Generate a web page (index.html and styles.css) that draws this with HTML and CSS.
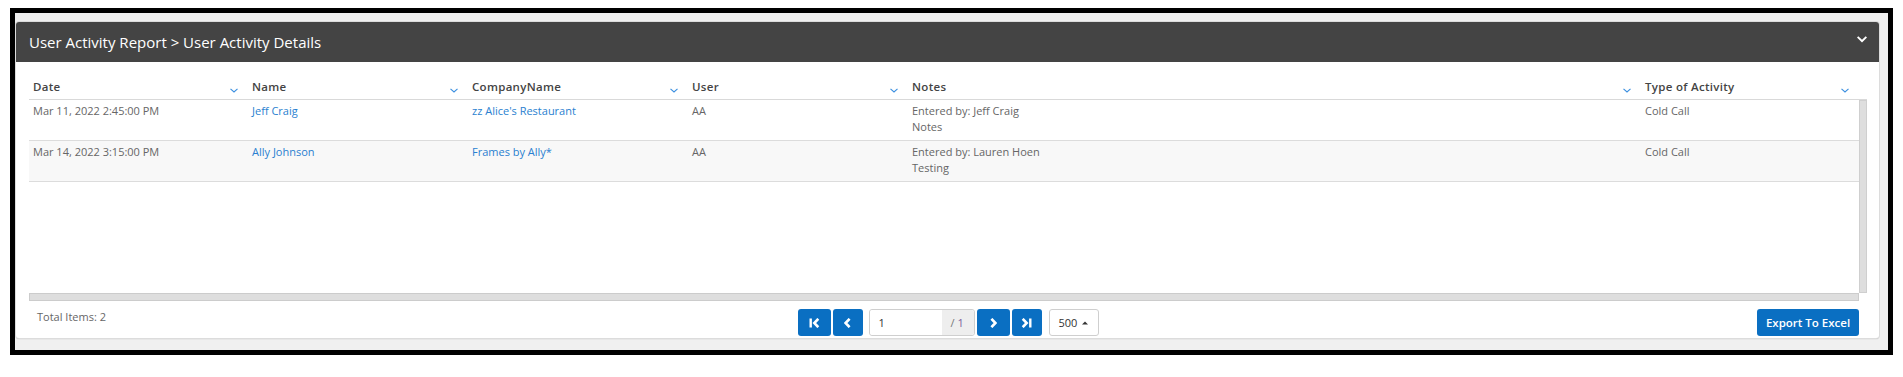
FILE: index.html
```html
<!DOCTYPE html>
<html>
<head>
<meta charset="utf-8">
<link rel="stylesheet" href="styles.css">
</head>
<body>
<div class="frame">
  <div class="panel">
    <div class="panel-head">
      <span class="title">User Activity Report &gt; User Activity Details</span>
      <svg class="toggle" width="10" height="7" viewBox="0 0 10 7"><path d="M1.3 0.2 L5 3.7 L8.7 0.2 L10 1.6 L5 6.6 L0 1.6 Z" fill="#fff"/></svg>
    </div>
    <div class="panel-body">
      <div class="grid">
        <div class="grid-head">
          <div class="hcell"><span>Date</span><svg class="sort" width="8" height="5" viewBox="0 0 8 5"><path d="M0.5 0.8 L4 4 L7.5 0.8" fill="none" stroke="#3b8fe0" stroke-width="1.1"/></svg></div>
          <div class="hcell"><span>Name</span><svg class="sort" width="8" height="5" viewBox="0 0 8 5"><path d="M0.5 0.8 L4 4 L7.5 0.8" fill="none" stroke="#3b8fe0" stroke-width="1.1"/></svg></div>
          <div class="hcell"><span>CompanyName</span><svg class="sort" width="8" height="5" viewBox="0 0 8 5"><path d="M0.5 0.8 L4 4 L7.5 0.8" fill="none" stroke="#3b8fe0" stroke-width="1.1"/></svg></div>
          <div class="hcell"><span>User</span><svg class="sort" width="8" height="5" viewBox="0 0 8 5"><path d="M0.5 0.8 L4 4 L7.5 0.8" fill="none" stroke="#3b8fe0" stroke-width="1.1"/></svg></div>
          <div class="hcell"><span>Notes</span><svg class="sort" width="8" height="5" viewBox="0 0 8 5"><path d="M0.5 0.8 L4 4 L7.5 0.8" fill="none" stroke="#3b8fe0" stroke-width="1.1"/></svg></div>
          <div class="hcell"><span>Type of Activity</span><svg class="sort" width="8" height="5" viewBox="0 0 8 5"><path d="M0.5 0.8 L4 4 L7.5 0.8" fill="none" stroke="#3b8fe0" stroke-width="1.1"/></svg></div>
          <div class="hcell spacer"></div>
        </div>
        <div class="grid-main">
          <div class="rows">
            <div class="row">
              <div class="cell">Mar 11, 2022 2:45:00 PM</div>
              <div class="cell"><a class="link">Jeff Craig</a></div>
              <div class="cell"><a class="link">zz Alice's Restaurant</a></div>
              <div class="cell">AA</div>
              <div class="cell">Entered by: Jeff Craig<br>Notes</div>
              <div class="cell">Cold Call</div>
            </div>
            <div class="row alt">
              <div class="cell">Mar 14, 2022 3:15:00 PM</div>
              <div class="cell"><a class="link">Ally Johnson</a></div>
              <div class="cell"><a class="link">Frames by Ally*</a></div>
              <div class="cell">AA</div>
              <div class="cell">Entered by: Lauren Hoen<br>Testing</div>
              <div class="cell">Cold Call</div>
            </div>
          </div>
          <div class="vscroll"></div>
        </div>
        <div class="hscroll"></div>
      </div>
      <div class="footer">
        <div class="total">Total Items: 2</div>
        <div class="pager">
          <button class="pbtn w33"><svg width="11" height="10" viewBox="0 0 11 10"><rect x="0.5" y="0.5" width="2.4" height="9" fill="#fff"/><path d="M9.3 0.8 L5.3 5 L9.3 9.2" fill="none" stroke="#fff" stroke-width="2.6"/></svg></button>
          <button class="pbtn w30"><svg width="7" height="10" viewBox="0 0 7 10"><path d="M5.6 0.8 L1.6 5 L5.6 9.2" fill="none" stroke="#fff" stroke-width="2.6"/></svg></button>
          <div class="pinput"><span class="pnum">1</span><span class="pof">/ <em>1</em></span></div>
          <button class="pbtn w33"><svg width="7" height="10" viewBox="0 0 7 10"><path d="M1.4 0.8 L5.4 5 L1.4 9.2" fill="none" stroke="#fff" stroke-width="2.6"/></svg></button>
          <button class="pbtn w30"><svg width="11" height="10" viewBox="0 0 11 10"><path d="M1.7 0.8 L5.7 5 L1.7 9.2" fill="none" stroke="#fff" stroke-width="2.6"/><rect x="8.1" y="0.5" width="2.4" height="9" fill="#fff"/></svg></button>
          <div class="psize">500 <svg width="6" height="4" viewBox="0 0 6 4"><path d="M0 3.5 L3 0.5 L6 3.5 Z" fill="#333"/></svg></div>
        </div>
        <div class="actions"><button class="export">Export To Excel</button></div>
      </div>
    </div>
  </div>
</div>
</body>
</html>
```

FILE: styles.css
```css
* { box-sizing: border-box; }
html, body { margin: 0; padding: 0; background: #fff; }
body { font-family: "Open Sans", "Noto Sans", sans-serif; }

.frame {
  margin: 8px 0 0 10px;
  width: 1883px;
  height: 347px;
  border: 5px solid #000;
  background: #f0f0f0;
  padding: 9px 9px 12px 1px;
}

.panel {
  width: 1863px;
  height: 316px;
  background: #fff;
  border-radius: 3px;
  box-shadow: 0 0 0 1px #dcdcdc, 0 1px 1px 0 #9a9a9a;
  display: flex;
  flex-direction: column;
}

.panel-head {
  height: 40px;
  background: #444444;
  border-radius: 3px 3px 0 0;
  display: flex;
  align-items: center;
  justify-content: space-between;
  padding: 0 12px 0 13px;
}
.title {
  color: #fff;
  font-size: 15px;
  font-weight: 500;
}
.toggle { display: block; margin-top: -5px; }

.panel-body {
  flex: 1;
  display: flex;
  flex-direction: column;
}

.grid {
  margin: 11px 12px 0 13px;
}
.grid-head {
  display: grid;
  grid-template-columns: 219px 220px 220px 220px 733px 218px 8px;
  height: 27px;
  border-bottom: 1px solid #d9d9d9;
}
.hcell {
  display: flex;
  align-items: center;
  justify-content: space-between;
  padding: 0 10px 0 4px;
  font-size: 11.5px;
  font-weight: 600;
  letter-spacing: 0.3px;
  color: #444;
}
.hcell .sort { margin-top: 9px; }
.hcell.spacer { padding: 0; }

.grid-main {
  display: flex;
  height: 193px;
}
.rows {
  width: 1830px;
}
.row {
  display: grid;
  grid-template-columns: 219px 220px 220px 220px 733px 218px;
  height: 41px;
  border-bottom: 1px solid #dcdcdc;
}
.row.alt { background: #f8f8f8; }
.cell {
  padding: 3px 4px 0 4px;
  font-size: 11px;
  line-height: 16px;
  color: #666;
}
.link { color: #2a7fd0; text-decoration: none; }

.vscroll {
  width: 8px;
  height: 193px;
  background: #dedede;
  border: 1px solid #cfcfcf;
}
.hscroll {
  width: 1830px;
  height: 8px;
  background: #dedede;
  border: 1px solid #cccccc;
}

.footer {
  display: grid;
  grid-template-columns: 1fr auto 1fr;
  align-items: start;
  padding: 8px 20px 0 21px;
}
.total {
  font-size: 11px;
  color: #666;
  line-height: 16px;
}
.pager {
  display: flex;
  align-items: center;
  height: 27px;
}
.pbtn {
  height: 27px;
  border: none;
  border-radius: 3px;
  background: #0a6fc2;
  display: flex;
  align-items: center;
  justify-content: center;
  padding: 0;
  margin-right: 2px;
}
.pbtn svg { display: block; }
.w33 { width: 33px; }
.w30 { width: 30px; }
.pinput {
  display: flex;
  height: 27px;
  margin: 0 2px 0 4px;
  border: 1px solid #cfcfcf;
  border-radius: 3px;
  font-size: 11px;
}
.pnum {
  width: 72px;
  padding-left: 9px;
  line-height: 25px;
  color: #333;
  background: #fff;
  border-radius: 3px 0 0 3px;
}
.pof {
  width: 32px;
  background: #eeeeee;
  color: #777;
  line-height: 25px;
  padding-left: 9px;
  border-radius: 0 3px 3px 0;
}
.pof em { font-style: normal; color: #7a5c9c; }
.psize {
  margin-left: 5px;
  width: 50px;
  height: 27px;
  border: 1px solid #cfcfcf;
  border-radius: 3px;
  display: flex;
  align-items: center;
  gap: 5px;
  padding-left: 9px;
  font-size: 11px;
  color: #333;
}
.actions { display: flex; justify-content: flex-end; }
.export {
  width: 102px;
  height: 27px;
  border: none;
  border-radius: 3px;
  background: #0a6fc2;
  color: #fff;
  font-family: "Open Sans", "Noto Sans", sans-serif;
  font-size: 11.5px;
  font-weight: 600;
  padding: 0;
}
```
